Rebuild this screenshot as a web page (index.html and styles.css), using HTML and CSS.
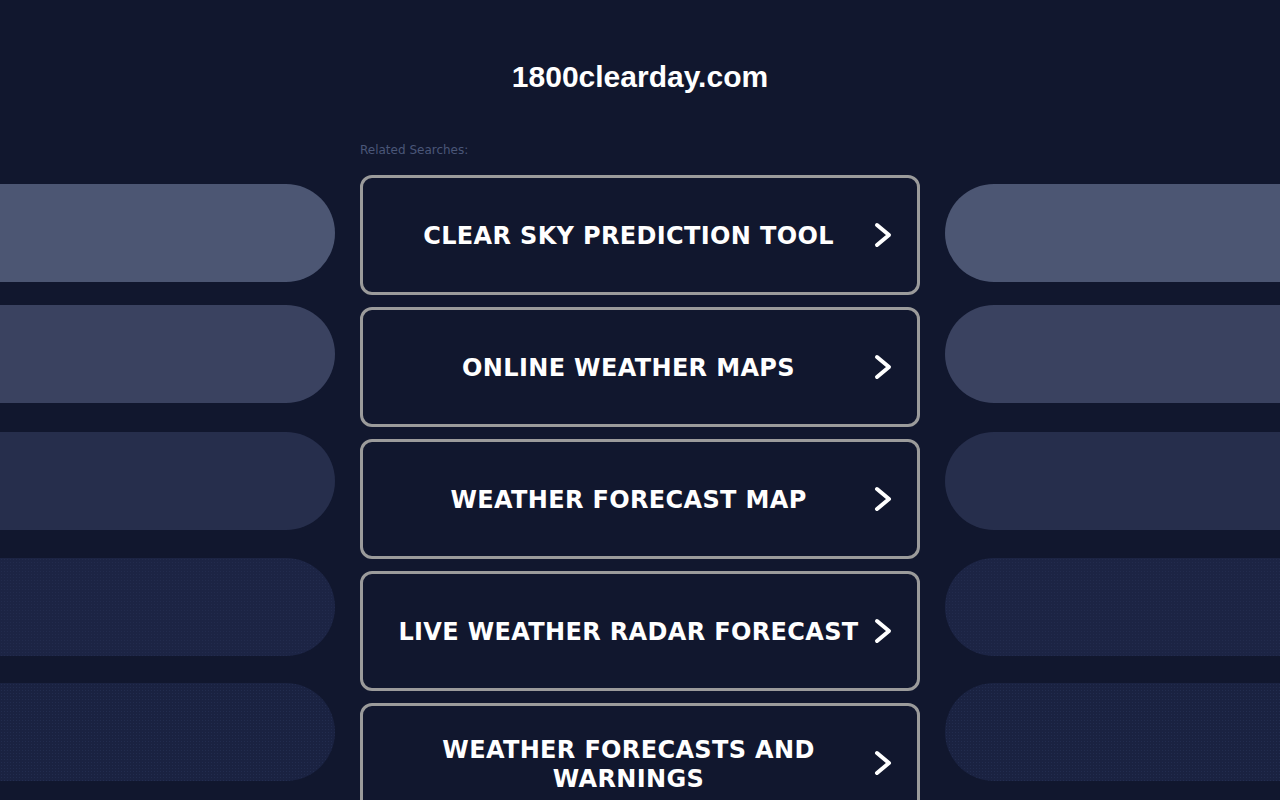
FILE: index.html
```html
<!DOCTYPE html>
<html lang="en">
<head>
<meta charset="utf-8">
<title>1800clearday.com</title>
<link rel="stylesheet" href="styles.css">
</head>
<body>
<header class="title">1800clearday.com</header>
<main class="layout">
  <aside class="side side-left">
    <div class="pill pill-1"></div>
    <div class="pill pill-2"></div>
    <div class="pill pill-3"></div>
    <div class="pill pill-4"></div>
    <div class="pill pill-5"></div>
  </aside>
  <section class="center">
    <p class="label">Related Searches:</p>
    <a class="card" href="#"><span class="card-text">CLEAR SKY PREDICTION TOOL</span><svg class="chev" viewBox="0 0 18 26" width="18" height="26"><polyline points="3,3 15,13 3,23"/></svg></a>
    <a class="card" href="#"><span class="card-text">ONLINE WEATHER MAPS</span><svg class="chev" viewBox="0 0 18 26" width="18" height="26"><polyline points="3,3 15,13 3,23"/></svg></a>
    <a class="card" href="#"><span class="card-text">WEATHER FORECAST MAP</span><svg class="chev" viewBox="0 0 18 26" width="18" height="26"><polyline points="3,3 15,13 3,23"/></svg></a>
    <a class="card" href="#"><span class="card-text">LIVE WEATHER RADAR FORECAST</span><svg class="chev" viewBox="0 0 18 26" width="18" height="26"><polyline points="3,3 15,13 3,23"/></svg></a>
    <a class="card" href="#"><span class="card-text">WEATHER FORECASTS AND WARNINGS</span><svg class="chev" viewBox="0 0 18 26" width="18" height="26"><polyline points="3,3 15,13 3,23"/></svg></a>
  </section>
  <aside class="side side-right">
    <div class="pill pill-1"></div>
    <div class="pill pill-2"></div>
    <div class="pill pill-3"></div>
    <div class="pill pill-4"></div>
    <div class="pill pill-5"></div>
  </aside>
</main>
</body>
</html>
```
FILE: styles.css
```css
html, body {
  margin: 0;
  padding: 0;
  background: #11172e;
  height: 100%;
  overflow: hidden;
}
body {
  font-family: "DejaVu Sans", Verdana, sans-serif;
  color: #fff;
}
.title {
  font-family: "Liberation Sans", Arial, sans-serif;
  font-weight: bold;
  font-size: 30px;
  line-height: 38px;
  text-align: center;
  padding-top: 58px;
  color: #fff;
}
.layout {
  display: grid;
  grid-template-columns: 335px 560px 335px;
  column-gap: 25px;
  margin-top: 46px;
}
.side {
  display: flex;
  flex-direction: column;
  padding-top: 42px;
}
.pill {
  height: 98px;
  background: #4c5673;
}
.side-left .pill { border-radius: 0 49px 49px 0; }
.side-right .pill { border-radius: 49px 0 0 49px; }
.pill-2 { margin-top: 23px; background: #3a4260; }
.pill-3 { margin-top: 29px; background: #262e4c; }
.pill-4 {
  margin-top: 28px;
  background-color: #1c2444;
  background-image: radial-gradient(circle, rgba(60,75,115,0.18) 0.6px, transparent 0.9px);
  background-size: 3px 3px;
}
.pill-5 {
  margin-top: 27px;
  background-color: #1a2241;
  background-image: radial-gradient(circle, rgba(60,75,115,0.25) 0.6px, transparent 0.9px);
  background-size: 3px 3px;
}
.center {
  display: flex;
  flex-direction: column;
  gap: 12px;
}
.label {
  margin: 0 0 4px 0;
  font-size: 12px;
  line-height: 17px;
  color: #4a5678;
}
.card {
  box-sizing: border-box;
  height: 120px;
  border: 3px solid #9b9b9b;
  border-radius: 12px;
  display: flex;
  align-items: center;
  padding: 0 25px 0 20px;
  text-decoration: none;
  color: #fff;
  flex-shrink: 0;
}
.card-text {
  flex: 1;
  text-align: center;
  font-weight: bold;
  font-size: 24px;
  line-height: 29px;
  letter-spacing: 0.35px;
  padding-top: 3px;
}
.chev {
  flex-shrink: 0;
  fill: none;
  stroke: #fff;
  stroke-width: 4;
  stroke-linecap: round;
  stroke-linejoin: round;
}
```
